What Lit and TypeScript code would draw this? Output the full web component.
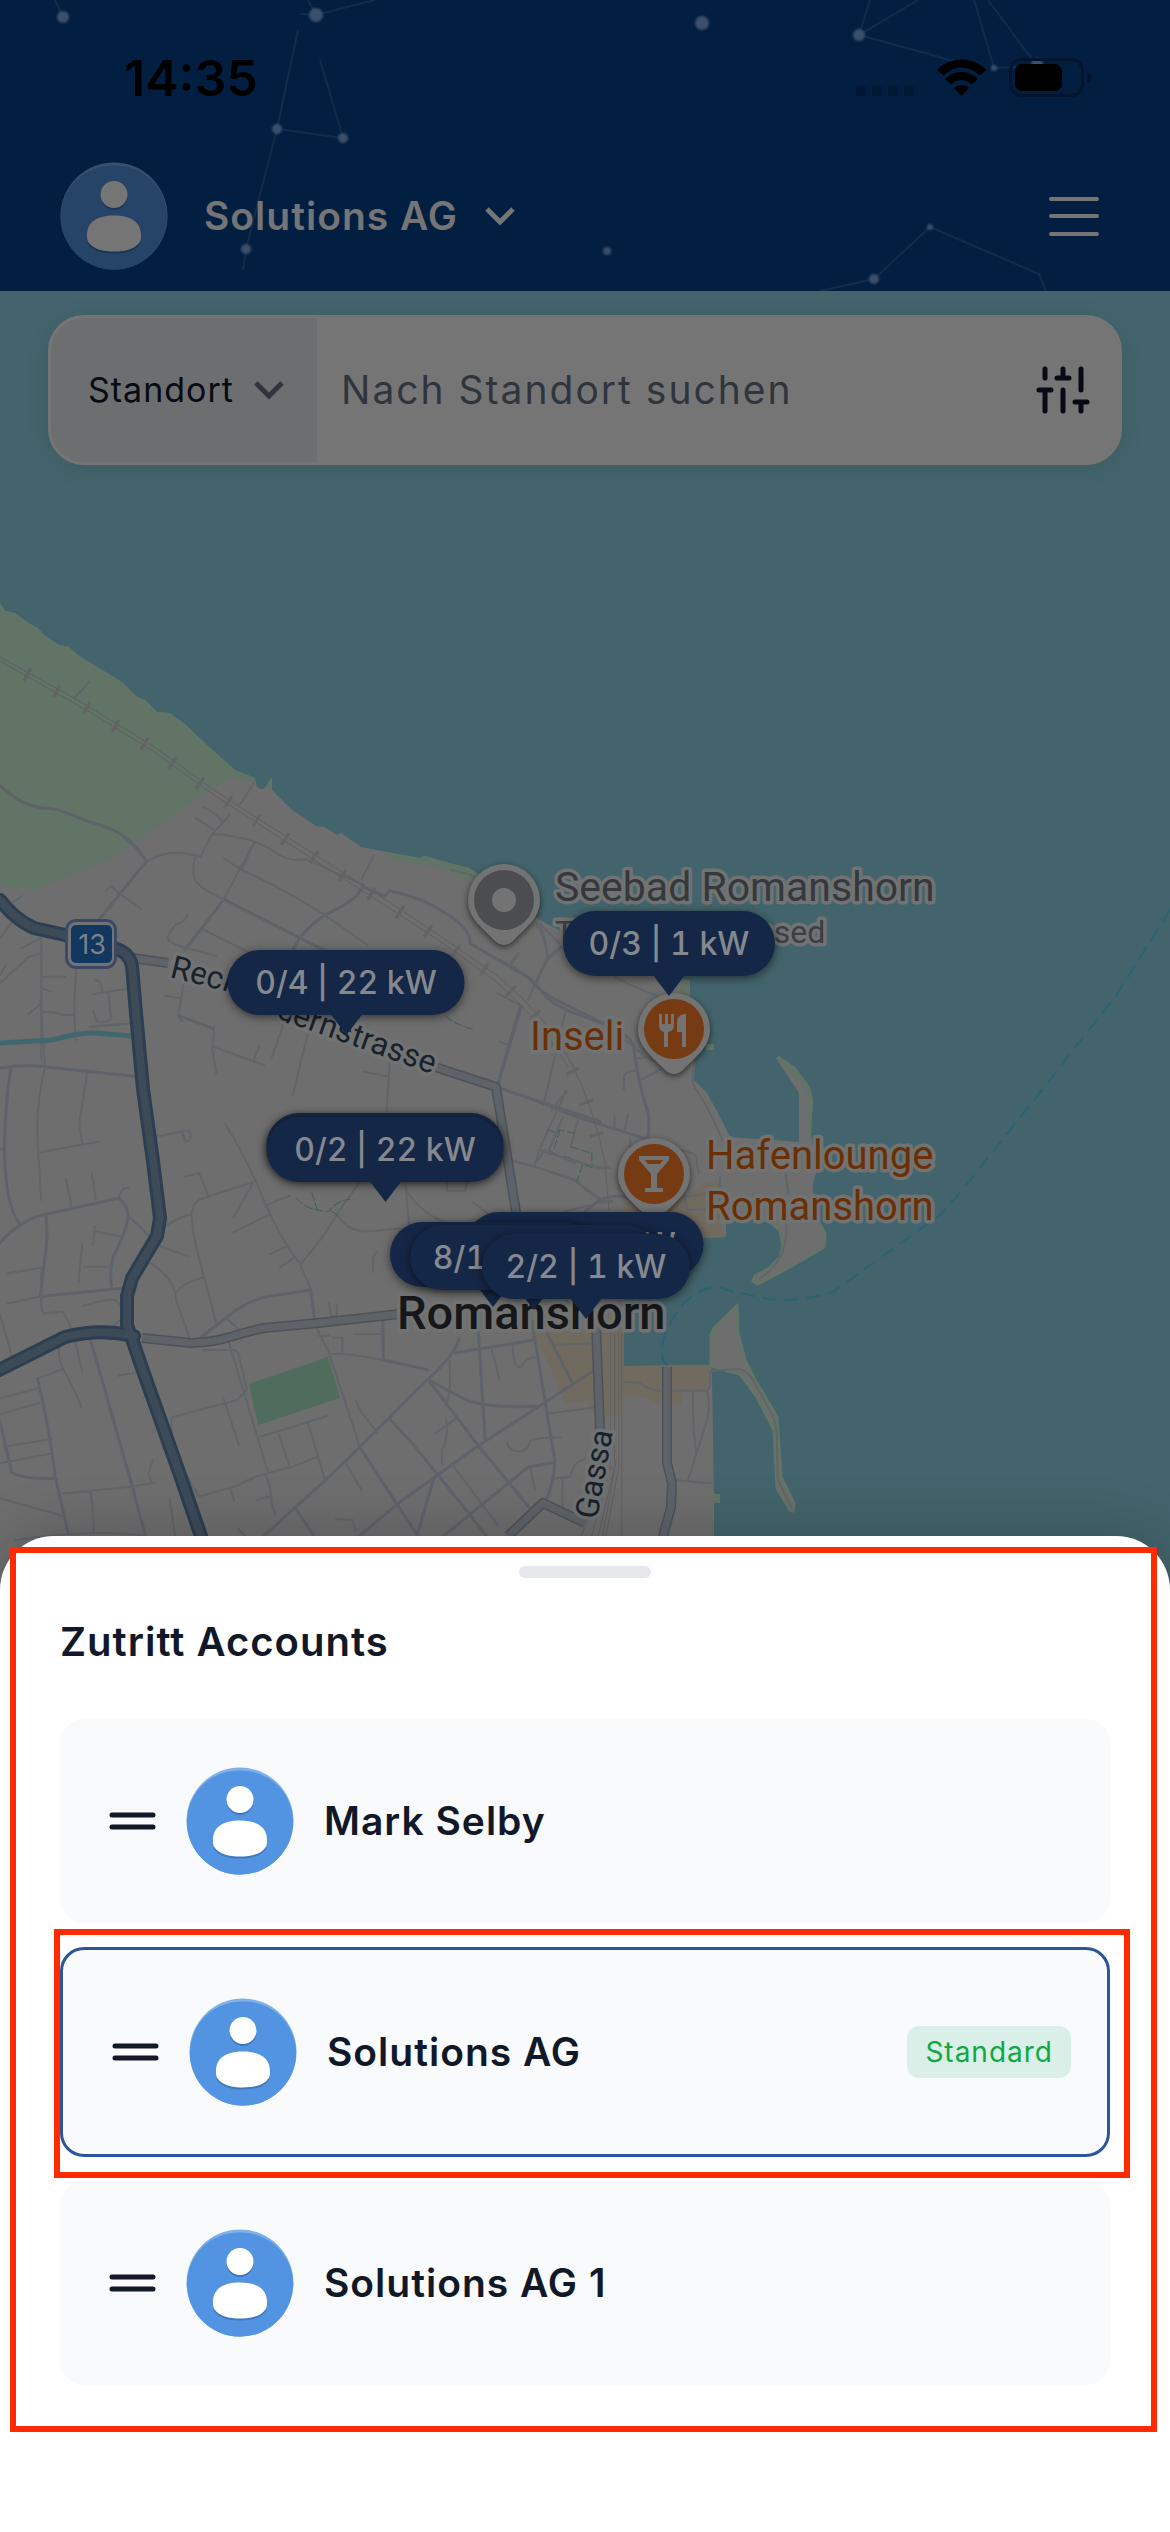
import { LitElement, html, svg, css } from "lit";
import { customElement, property, state } from "lit/decorators.js";
import { classMap } from "lit/directives/class-map.js";
import { styleMap } from "lit/directives/style-map.js";

interface Account {
  name: string;
  standard: boolean;
}

interface Station {
  label: string;
  x: number;
  y: number;
  width: number;
}

const ACCOUNTS: Account[] = [
  { name: "Mark Selby", standard: false },
  { name: "Solutions AG", standard: true },
  { name: "Solutions AG 1", standard: false },
];

/* x is the tip of the bubble, y its top edge, both inside the map.
   Bubbles whose label lies fully under a neighbour carry no text. */
const STATIONS: Station[] = [
  { label: "0/4 | 22 kW", x: 346, y: 659, width: 237 },
  { label: "0/3 | 1 kW", x: 669, y: 620, width: 212 },
  { label: "", x: 385, y: 822, width: 237 },
  { label: "0/2 | 22 kW", x: 385, y: 826, width: 237 },
  { label: "4/4 | 22 kW", x: 585, y: 921, width: 237 },
  { label: "", x: 493, y: 931, width: 206 },
  { label: "8/10 | 22 kW", x: 534, y: 934, width: 248 },
  { label: "2/2 | 1 kW", x: 586, y: 943, width: 208 },
];

const MAP_WIDTH = 1170;

@customElement("user-avatar")
class UserAvatar extends LitElement {
  @property({ type: Boolean, reflect: true }) dimmed = false;

  static styles = css`
    :host {
      display: block;
      flex: none;
      width: 108px;
      height: 108px;
      --disc: #5294e2;
      --rim: #7fb0ea;
      --shade: #3f78bd;
      --person: #ffffff;
    }
    :host([dimmed]) {
      --disc: #264467;
      --rim: #39506d;
      --shade: #1c3556;
      --person: #757575;
    }
    .art {
      display: block;
      width: 100%;
      height: 100%;
    }
    .rim { fill: var(--rim); }
    .disc { fill: var(--disc); }
    .shade { fill: var(--shade); }
    .person { fill: var(--person); }
  `;

  render() {
    return html`
      <svg class="art" viewBox="0 0 108 108" aria-hidden="true">
        <circle class="rim" cx="54" cy="54" r="53.5" />
        <path class="disc" d="M.8 54.500a53.200 53.200 0 0 0 106.400 0C106 24 83 3.500 54 3.500S2 24 .8 54.500z" />
        <g class="shade">
          <circle cx="54" cy="34.500" r="13.500" />
          <path d="M27 75c0-13 10-20 27-20s27 7 27 20c0 3.500 0 6-2 8-4 6-14 8.500-25 8.500S33 89 29 83c-2-2-2-4.500-2-8z" />
        </g>
        <g class="person">
          <circle cx="54" cy="32.500" r="13.500" />
          <path d="M27 73c0-13 10-19.500 27-19.500S81 60 81 73c0 3.500 0 6-2 8-4 6-14 8.500-25 8.500S33 87 29 81c-2-2-2-4.500-2-8z" />
        </g>
      </svg>
    `;
  }
}

@customElement("city-map")
class CityMap extends LitElement {
  static styles = css`
    :host {
      display: block;
      position: absolute;
      inset: 0;
      overflow: hidden;
      background: #43646c;
      font-family: Inter, "Liberation Sans", sans-serif;
    }
    .scene {
      display: block;
      width: 100%;
      height: 100%;
    }
    path, polyline { vector-effect: non-scaling-stroke; }
    .land { fill: #6e6e6e; stroke: none; }
    .reef { fill: #6e6e6e; stroke: #627567; stroke-width: 3; }
    .green { fill: #617466; }
    .park { fill: #506c5c; }
    .works { fill: #716a5f; }
    .line { fill: none; stroke-linejoin: round; stroke-linecap: round; }
    .minor { stroke: #616469; stroke-width: 2; }
    .street { stroke: #5f6369; stroke-width: 3; }
    .case2 { stroke: #4e5257; stroke-width: 10; stroke-linecap: butt; }
    .road2 { stroke: #5e6369; stroke-width: 7; stroke-linecap: butt; }
    .case1 { stroke: #2c3e4f; stroke-width: 14; }
    .road1 { stroke: #3d4a58; stroke-width: 8; }
    .rail { stroke: #606062; stroke-width: 1; }
    .ties { stroke: #636365; stroke-width: 14; stroke-dasharray: 3 31; stroke-linecap: butt; }
    .stream { stroke: #40666f; stroke-width: 5; }
    .foot { stroke: #3f5f55; stroke-width: 1; stroke-dasharray: 8 3; }
    .ferry { stroke: #2a6371; stroke-width: 2; stroke-dasharray: 14 8; stroke-linecap: butt; }
    .label { paint-order: stroke; stroke-linejoin: round; stroke-width: 7; stroke: #717373; font-family: Roboto, "Liberation Sans", sans-serif; }
    .quiet { fill: #35383d; font-size: 41px; }
    .note { fill: #3b3f43; font-size: 32px; }
    .food { fill: #6b2f05; font-size: 40px; }
    .way { fill: #18222c; font-size: 32px; }
    .town { fill: #161718; font-size: 47px; font-weight: 500; }
    .pin { fill: #737373; filter: drop-shadow(0 2px 3px rgb(0 0 0 / 60%)); }
    .pin-grey { fill: #4c4d4f; }
    .pin-food { fill: #763b12; }
    .glyph { fill: #737373; }
    .shield-rim { fill: #3d4962; }
    .shield-edge { fill: #707478; }
    .shield { fill: #123860; }
    .shield-text { fill: #7d8287; font-size: 27px; text-anchor: middle; }
    .station {
      position: absolute;
      height: 65px;
      padding: 0;
      border: 0;
      border-radius: 33px;
      background: #152747;
      color: #85888e;
      font: 500 32px/65px Inter, "Liberation Sans", sans-serif;
      font-variant-numeric: tabular-nums;
      white-space: nowrap;
      transform: translateX(-50%);
      box-shadow: 0 2px 10px rgb(0 0 0 / 55%);
    }
    .station::after {
      content: "";
      position: absolute;
      left: 50%;
      top: 64px;
      margin-left: -16px;
      border: 16px solid transparent;
      border-top: 21px solid #152747;
      border-bottom: 0;
    }
  `;

  private pin(x: number, y: number, tone: string, glyph: unknown) {
    return svg`
      <g transform="translate(${x} ${y})">
        <path class="pin" d="M-36 0a36 36 0 0 1 72 0c0 17-11 25-27 41q-9 8-18 0C-25 25-36 17-36 0z"/>
        <circle class=${tone} r="30"/>
        ${glyph}
      </g>`;
  }

  private terrain() {
    return svg`
      <path class="land" d="M0 603L5 611 15 613 27 622 38 628 44 635 59 645 69 647 78 655 99 668 122 682 137 697 145 700 157 712 170 713 186 725 207 745 235 770 255 778 257 787 261 789 265 788 272 777 272 790 291 809 316 826 325 827 337 835 341 833 361 847 387 852 419 858 425 856 446 862 469 868 478 874 540 920 564 933 620 950 680 975 690 985 690 1030 695 1067 694 1080 707 1093 718 1113 730 1137 799 1142 799 1093 776 1058 779 1056 795 1067 810 1087 813 1100 811 1133 816 1173 813 1183 814 1210 818 1222 771 1223 726 1215 726 1237 705 1238 624 1260 624 1366 711 1365 712 1377 714 1493 714 1600 0 1600z"/>
      <path class="reef" d="M771 1223L780 1230 783 1247 780 1257 770 1268 755 1276 753 1281 758 1284 790 1267 824 1247 825 1233 818 1222z"/>
      <path class="reef" d="M711 1366V1335L714 1328 737 1306 738 1333 745 1360 755 1380 777 1417 781 1477 794 1503 793 1511 790 1510 777 1488 774 1430 757 1397 740 1374z"/>
      <path class="green" d="M776 1058L779 1056 795 1067 810 1087 813 1100 811 1133 808 1133 808 1100 805 1088z"/>
      <path class="green" d="M0 603L5 611 15 613 27 622 38 628 44 635 59 645 69 647 78 655 99 668 122 682 137 697 145 700 157 712 170 713 186 725 207 745 235 770 255 778 254 783 230 777 184 807 134 843 103 862 36 889 0 886z"/>
      <path class="green" d="M387 852L419 858 425 856 446 862 469 868 478 874 470 882 440 868 390 859zM265 788L272 777 272 790zM680 980h10v16h-10zM706 1044h8v6h-8zM713 1494h7v9h-7z"/>
      <path class="works" d="M534 1332L594 1330 624 1300V1366L710 1365V1391H681L682 1404 662 1405 641 1396 622 1397V1416H605L586 1408 592 1400 566 1403 551 1370zM624 1203L684 1197 705 1183H719V1220L726 1237 705 1238 624 1240z"/>
      <path class="park" d="M249 1384L328 1357 340 1398 258 1425z"/>`;
  }

  private streets() {
    return svg`
      <g transform="translate(0 560) scale(.38265 .33333)">
        <path class="line street" d="M0 675Q50 735 115 745Q150 742 230 785Q300 805 330 835Q370 875 382 905L258 1080M585 1018L483 1170M585 1018L880 1190M765 1170Q790 1110 848 1065Q930 1025 948 980L1005 1008L1018 992Q1100 1010 1165 1060Q1230 1105 1228 1150L1385 1255Q1410 1300 1480 1335L1568 1385"/>
        <path class="line minor" d="M382 905Q440 870 480 880Q510 885 525 890Q535 860 555 822L600 765M555 822Q610 825 665 845L585 1018Q510 980 507 950Q502 920 510 893M665 845Q700 860 730 885Q760 905 800 898L950 975M530 740Q560 755 580 782M512 775L558 808M585 895L632 930Q740 985 848 1065L960 1155M632 930L665 845M628 733L663 670M196 412L234 365M945 958L978 885M278 992L290 977L312 1000L370 1047M258 1080L200 1150M530 1108L690 1200M490 1065Q480 1090 460 1092Q440 1120 438 1135Q445 1150 470 1158L565 1188M480 1270L466 1365Q468 1380 480 1385M430 1307L470 1315M0 1135L35 1080L25 1035L58 1008M108 1120V1500M55 1165L108 1133M0 1270L75 1190L108 1180M0 1245L15 1215M108 1250H170M108 1285L135 1295M108 1330L75 1362M108 1355Q150 1355 165 1365H195M200 1215Q190 1350 198 1440M244 1302L340 1285M250 1260Q270 1265 266 1298M283 1298L290 1375Q280 1390 252 1384L244 1352M235 1400L350 1390M1410 1090Q1430 1150 1430 1190L1380 1320M1430 1195L1470 1155M1335 1215L1355 1180M1410 1090L1470 1160M1360 1340L1320 1500M1358 1335L1300 1300M1180 930Q1220 940 1240 950"/>
      </g>
      <g transform="translate(500 800) scale(.4273 .33333)">
        <path class="line street" d="M0 480Q60 520 85 555Q110 605 155 630L240 670Q300 700 312 735Q325 860 345 930Q352 970 345 1015M0 865Q60 890 105 912Q150 940 215 965L345 1018M50 620L0 830M200 1235Q240 1180 290 1190L330 1200"/>
        <path class="line minor" d="M85 370Q110 430 112 475L85 552M112 480L145 440M20 500L42 460M270 530Q290 550 370 588M155 625L103 908M240 665L340 770Q370 790 380 790M318 775L340 772M315 812Q290 815 290 830V868M330 840L380 805M455 790Q445 850 460 870Q500 950 520 1020M0 725L18 735M155 875L125 955L92 1050L80 1100L25 1080M92 1050Q120 1050 125 1060L175 1090M80 1100L180 1140Q200 1175 235 1200M183 958L165 1040M268 948V985M300 942L290 1000M305 1018V1060M400 1045Q450 1055 458 1068L465 1120M435 1190L480 1182M432 1190L438 1230L480 1228M515 1130V1250M668 1118L675 1180M670 1270Q672 1340 655 1370Q640 1410 608 1436"/>
        <path class="line foot" d="M110 988L130 998L140 990L175 1000M140 990L125 1052M165 1040L215 1060V1100M150 1068L220 1105M193 1095L180 1145"/>
      </g>
      <g transform="translate(0 1000) scale(.38265 .35714)">
        <path class="line street" d="M0 190Q70 180 115 187L365 215M28 190Q10 330 12 430Q15 580 52 627M0 680Q60 610 120 600L310 555Q335 575 335 605Q330 650 295 720Q285 770 292 805M120 600Q125 660 120 700L105 830L330 806M470 45L558 80M525 945L600 882Q650 840 700 830L812 812L825 915M237 952L345 1360L380 1500M98 1060Q130 1200 145 1340L178 1490M0 1180L30 1320Q40 1340 150 1340M690 1500L850 1345L940 1252L1118 1062Q1180 1005 1200 950M940 1500L1040 1410L1250 1248L1420 1130L1555 1035M940 1252L1090 1498M1018 1172L1080 1245L1220 1430L1270 1500M1118 1062L1250 1248L1390 1430M1118 1062Q1180 1100 1230 1125Q1290 1142 1400 1138M1000 890L1002 1008L1118 1035M1190 988L1395 952M1250 930L1268 1230M1390 900L1450 1290Q1450 1340 1425 1410M1090 1498L1135 1335M1160 1500L1380 1308L1450 1295M770 1420L820 1500M1430 935L1495 1070M1300 245L1568 340M1360 18L1300 240"/>
        <path class="line minor" d="M105 0L118 187M118 187Q90 300 100 430L108 560M228 203L207 345L215 402M100 427L258 397M0 418H12M172 500L187 578M240 485L250 560M248 633L243 688M248 648L315 662M20 765L108 750M108 750V830M222 747H290M215 684L205 790M310 555L320 530L335 526M335 605L420 690L490 717M500 600Q505 570 520 560L545 550L662 510M408 383L475 368Q500 360 498 378Q500 395 485 395L475 370M482 495L520 484L545 550M500 600Q505 680 540 800L565 905M425 640Q460 610 500 600M386 732Q460 780 460 840L497 950M460 820Q480 790 535 776M588 347Q650 450 695 575Q740 680 785 740L812 810M662 510L610 610M695 575L758 548M610 650L705 600M705 713L748 690M732 748L768 722M785 740Q850 660 880 600L940 510M880 600Q910 650 960 648L1050 640M985 706L975 720V762M560 75L555 140L565 205M560 132L690 182M678 128L662 170M805 90L765 267M740 70L710 160M950 200L1015 215M1020 150L1010 315M1060 520L1070 640M1060 530Q1100 600 1170 625M1235 565L1290 610M0 880L33 1005M20 850L105 830M108 830Q105 870 115 878L165 872Q180 900 192 935L215 1040M216 857Q280 835 302 840Q325 860 320 890L285 925M98 1060L165 1033Q150 1000 155 970M165 1033Q190 1080 213 1140M0 1115L98 1088M0 1160L105 1128M10 1250L135 1230M0 1297L135 1270M165 1382L240 1374L345 1362L405 1352M235 1374Q245 1420 245 1490M0 1395L165 1445M40 1512Q240 1480 380 1500M400 1288L388 1325L395 1350M443 1395L458 1500M530 980H600Q622 975 625 1000L645 1090L620 1120L450 1168Q440 1190 470 1300L520 1390L620 1360Q650 1340 690 1328L770 1305L832 1277M597 955L635 1090L700 1320M585 1118L625 1248M680 1222L752 1200L855 1165M728 1215L755 1302M805 1185L848 1340M602 1370L612 1402M695 1330Q710 1370 710 1410L718 1440M672 1400L708 1388M620 1478L640 1500M825 915L862 992Q900 988 1002 1008M832 940H860M870 945L895 946V985M860 990L940 1250M930 1122Q940 1150 960 1175L985 1210M925 935H995M1175 1010Q1180 1100 1165 1135M1135 1215L1192 1172M1165 1170Q1175 1220 1155 1260V1302M1285 980L1305 1062M1340 965Q1340 1040 1365 1025Q1375 1000 1400 1000M1325 1237Q1330 1270 1365 1262Q1380 1260 1385 1235Q1400 1225 1465 1225M1435 1158L1555 1140M900 1290L945 1372M1180 1298L1300 1470M1250 1400L1300 1468M1385 1310L1398 1370M1470 1340V1440M1450 1340L1490 1335Q1500 1290 1530 1285M878 1453L920 1455L930 1485M860 850L865 885H880V855M590 890L622 920M1440 310L1480 255M1435 420L1470 330M1395 465L1420 425L1568 470M1335 450L1395 465L1500 505L1568 555M1168 510V535H1215L1225 490M1440 605Q1480 590 1540 575M310 1052L360 1043M235 75L350 65"/>
        <path class="line foot" d="M775 555Q800 590 860 592Q880 560 915 558M815 540L830 590M865 590L885 605M1165 45Q1190 70 1240 83"/>
      </g>
      <g transform="translate(500 1200) scale(.4273 .33333)">
        <path class="line minor" d="M290 545L325 548Q350 570 370 572H485L492 560V512L562 508Q580 515 592 540L635 640Q650 680 648 720L650 840Q670 890 683 925M452 575Q450 690 460 760L440 838M485 575Q495 620 480 680L460 760M410 840L495 850M130 435L215 430M155 300L180 330"/>
        <path class="line rail" d="M258 400V800L215 1008M268 400V800L230 1008M278 400V800L248 1008M285 400V1008M262 800L190 1008M272 780L240 1008"/>
      </g>`;
  }

  private arteries() {
    return svg`
      <path class="line stream" d="M0 1043L52 1040Q80 1032 96 1033L132 1036"/>
      <path class="line rail" d="M0 657L88 706 153 746 214 790 268 825 325 861 383 898 440 936 498 976Q550 1020 572 1064T605 1163L609 1210"/>
      <path class="line rail" d="M0 661L88 711 153 751 214 795 268 830 325 867 383 904 440 941 494 980Q545 1024 568 1067"/>
      <path class="line ties" d="M26 674L88 709 153 749 214 793 268 828 325 864 383 901 440 939 496 978Q546 1020 570 1066T603 1163L607 1210"/>
      <path class="line case2" d="M132 958L168 963M432 1066L496 1087 517 1218M142 1338L191 1343Q215 1342 230 1337T264 1328L318 1323 400 1314M596 1325L600 1430M667 1367V1463L672 1483 671 1507 662 1540M508 1536L543 1503 585 1523"/>
      <path class="line road2" d="M132 958L168 963M432 1066L496 1087 517 1218M142 1338L191 1343Q215 1342 230 1337T264 1328L318 1323 400 1314M596 1325L600 1430M667 1367V1463L672 1483 671 1507 662 1540M508 1536L543 1503 585 1523"/>
      <path class="line case1" d="M0 900Q15 920 34 928L65 935 92 942 117 949Q130 954 132 966L136 1013 143 1089 153 1161 160 1218 157 1236 132 1278 127 1296 127 1325 132 1339 142 1368 180 1475 204 1545M134 1336Q100 1328 65 1337L-5 1372"/>
      <path class="line road1" d="M0 900Q15 920 34 928L65 935 92 942 117 949Q130 954 132 966L136 1013 143 1089 153 1161 160 1218 157 1236 132 1278 127 1296 127 1325 132 1339 142 1368 180 1475 204 1545M134 1336Q100 1328 65 1337L-5 1372"/>
      <path class="line ferry" d="M1170 910L1115 997 1034 1100 962 1190 940 1215 833 1292Q795 1303 770 1299T718 1287Q690 1288 672 1320T667 1365"/>`;
  }

  private places() {
    return svg`
      <rect class="shield-rim" x="65" y="919" width="52" height="50" rx="11"/>
      <rect class="shield-edge" x="68" y="922" width="46" height="44" rx="8"/>
      <rect class="shield" x="71" y="925" width="41" height="38" rx="5"/>
      <text class="shield-text" x="92" y="954">13</text>
      <path id="street-line" fill="none" d="M169 977L225 991Q256 1001 284 1021L460 1084"/>
      <text class="label way"><textPath href="#street-line">Reckholdernstrasse</textPath></text>
      <path id="gassa-line" fill="none" d="M597 1520L604 1480 615 1420"/>
      <text class="label way"><textPath href="#gassa-line">Gassa</textPath></text>
      <text class="label quiet" x="555" y="901">Seebad Romanshorn</text>
      <text class="label note" x="555" y="943">Temporarily closed</text>
      <text class="label food" x="530" y="1050">Inseli</text>
      <text class="label food" x="706" y="1169">Hafenlounge</text>
      <text class="label food" x="706" y="1220">Romanshorn</text>
      <text class="label town" x="397" y="1329">Romanshorn</text>
      ${this.pin(504, 900, "pin-grey", svg`<circle class="glyph" r="12"/>`)}
      ${this.pin(674, 1029, "pin-food", svg`
        <path class="glyph" d="M-15-15h3v10h3v-10h3v10h3v-10h3V-4q0 6-6 7v15h-4V3q-5-1-5-7zM12-15V18H8V3H3V-6q0-9 9-9z"/>`)}
      ${this.pin(654, 1174, "pin-food", svg`
        <path class="glyph" d="M-15-18h30v4L3 0v14h6v4H-9v-4h6V0L-15-14zm6 4l3 4H6l3-4z"/>`)}`;
  }

  render() {
    return html`
      <svg class="scene" viewBox="0 291 1170 1299" preserveAspectRatio="xMidYMin slice" role="img" aria-label="Romanshorn">
        ${this.terrain()} ${this.streets()} ${this.arteries()} ${this.places()}
      </svg>
      ${STATIONS.map(
        (s) => html`<button
          type="button"
          class="station"
          aria-label=${s.label || "Station"}
          style=${styleMap({ left: `${(s.x / MAP_WIDTH) * 100}%`, top: `${s.y}px`, width: `${s.width}px` })}
        >${s.label}</button>`
      )}
    `;
  }
}

@customElement("account-card")
class AccountCard extends LitElement {
  @property() name = "";
  @property({ type: Boolean }) standard = false;

  static styles = css`
    :host { display: block; }
    .card {
      display: flex;
      align-items: center;
      gap: 30px;
      padding: 48px 36px 48px 48px;
      border-radius: 24px;
      background: #f9fafc;
    }
    .selected { border: 3px solid #2c5699; }
    .grip {
      flex: none;
      width: 48px;
      height: 48px;
      padding: 0;
      border: 0;
      background: none;
    }
    .icon { display: block; }
    .bar { stroke: #111827; stroke-width: 5; stroke-linecap: round; }
    .name {
      flex: 1;
      padding: 0;
      border: 0;
      background: none;
      color: #111827;
      text-align: left;
      font: 600 39px/48px Inter, "Liberation Sans", sans-serif;
      letter-spacing: 1px;
    }
    .badge {
      padding: 8px 18px;
      border-radius: 12px;
      background: #d9efe8;
      color: #0fa943;
      font: 400 28px/36px Inter, "Liberation Sans", sans-serif;
      letter-spacing: 1px;
    }
  `;

  render() {
    return html`
      <div class=${classMap({ card: true, selected: this.standard })}>
        <button class="grip" type="button" aria-label="Verschieben">
          <svg class="icon" width="48" height="48" viewBox="0 0 48 48" aria-hidden="true">
            <path class="bar" d="M4 18h41M4 30h41" />
          </svg>
        </button>
        <user-avatar></user-avatar>
        <button class="name" type="button">${this.name}</button>
        ${this.standard ? html`<span class="badge">Standard</span>` : null}
      </div>
    `;
  }
}

@customElement("app-root")
class AppRoot extends LitElement {
  @state() private accounts: Account[] = ACCOUNTS;

  static styles = css`
    :host {
      display: block;
      font-family: Inter, "Liberation Sans", sans-serif;
    }
    .screen {
      display: flex;
      flex-direction: column;
      min-height: 100vh;
      background: #43646c;
    }
    .top {
      position: relative;
      overflow: hidden;
      background: #021f42;
    }
    .stars {
      position: absolute;
      inset: 0;
      width: 100%;
      height: 100%;
    }
    .star { fill: #3c506b; filter: blur(1px); }
    .ray { fill: none; stroke: #112d4c; stroke-width: 2; }
    .status {
      position: relative;
      display: flex;
      align-items: center;
      justify-content: space-between;
      height: 156px;
      padding: 0 78px 0 124px;
      color: #000;
    }
    .clock { font-size: 50px; line-height: 60px; font-weight: 600; }
    .account-bar {
      position: relative;
      display: flex;
      align-items: center;
      justify-content: space-between;
      padding: 6px 60px 21px;
    }
    .switcher {
      display: flex;
      align-items: center;
      gap: 24px;
      padding: 0;
      border: 0;
      background: none;
      color: #757575;
      font: 600 39px/48px Inter, "Liberation Sans", sans-serif;
      letter-spacing: 1px;
    }
    .who { padding-left: 12px; }
    .chevron { fill: none; stroke: currentColor; stroke-width: 5; }
    .menu {
      padding: 0;
      border: 0;
      background: none;
      color: #757575;
    }
    .icon { display: block; }
    .menu-lines { stroke: currentColor; stroke-width: 4; stroke-linecap: round; }
    .map {
      position: relative;
      flex: 1;
      min-height: 400px;
    }
    .search {
      position: relative;
      display: flex;
      align-items: center;
      height: 144px;
      margin: 24px 48px 0;
      border: 3px solid #757575;
      border-radius: 36px;
      background: #757575;
      overflow: hidden;
    }
    .halo {
      position: absolute;
      inset: 24px 48px auto;
      height: 150px;
      border-radius: 36px;
      box-shadow: 0 4px 24px rgb(0 0 0 / 8%);
    }
    .scope {
      display: flex;
      align-items: center;
      align-self: stretch;
      position: relative;
      background: #6d6e70;
      color: #30343c;
    }
    .kind {
      appearance: none;
      align-self: stretch;
      width: 266px;
      padding: 0 80px 0 37px;
      border: 0;
      background: none;
      color: #080b14;
      font: 400 34px/42px Inter, "Liberation Sans", sans-serif;
      letter-spacing: 1px;
    }
    .kind-arrow { position: absolute; right: 33px; pointer-events: none; }
    .query {
      flex: 1;
      min-width: 0;
      padding: 0 24px;
      border: 0;
      background: none;
      color: #30353d;
      font: 400 39px/48px Inter, "Liberation Sans", sans-serif;
      letter-spacing: 2px;
    }
    .query::placeholder { color: #30353d; opacity: 1; }
    .filter {
      padding: 0 28px 0 0;
      border: 0;
      background: none;
    }
    .filter-lines { fill: none; stroke: #080b14; stroke-width: 5; stroke-linecap: round; }
    .sheet {
      position: relative;
      margin-top: -54px;
      padding: 30px 60px 147px;
      border-radius: 54px 54px 0 0;
      background: #fff;
      box-shadow: 0 0 60px rgb(0 0 0 / 22%);
    }
    .handle {
      width: 132px;
      height: 12px;
      margin: 0 auto;
      border-radius: 6px;
      background: #e5e7eb;
    }
    .title {
      margin: 40px 0 53px;
      color: #111827;
      font-size: 40px;
      line-height: 48px;
      font-weight: 600;
      letter-spacing: 1px;
    }
    .list {
      display: grid;
      gap: 24px;
      margin: 0;
      padding: 0;
      list-style: none;
    }
    .item { position: relative; }
    .mark {
      position: absolute;
      border: 6px solid #ff2a00;
      pointer-events: none;
    }
    .mark-sheet { inset: 11px 13px 100px 10px; }
    .mark-item { inset: -18px -20px -21px -6px; }
  `;

  private sky() {
    const stars = [
      [63, 17, 6], [316, 15, 7], [277, 129, 5], [343, 138, 5], [246, 249, 5], [702, 23, 7],
      [859, 35, 6], [994, 68, 3], [1037, 64, 6], [607, 251, 4], [874, 279, 5], [930, 227, 3],
    ];
    return html`
      <svg class="stars" viewBox="0 0 1170 291" preserveAspectRatio="xMidYMid slice" aria-hidden="true">
        <path class="ray" d="M55 0L63 17M300 14L316 15 375 0M308 0L316 15 300 14M298 30L277 129 343 138 320 60M277 129L246 249 243 270M870 0L859 35 918 0M859 35L965 64M974 0L994 68 1037 66 988 0M820 291L874 279 930 227 1039 274 1046 291" />
        ${stars.map(([x, y, r]) => svg`<circle class="star" cx=${x} cy=${y} r=${r} />`)}
      </svg>
    `;
  }

  render() {
    return html`
      <main class="screen">
        <header class="top">
          ${this.sky()}
          <div class="status">
            <span class="clock">14:35</span>
            <svg class="icon" width="236" height="40" viewBox="856 58 236 40" aria-hidden="true">
              <g fill="#001733">
                <rect x="856" y="86" width="10" height="10" rx="3" />
                <rect x="872" y="86" width="10" height="10" rx="3" />
                <rect x="888" y="86" width="10" height="10" rx="3" />
                <rect x="904" y="86" width="10" height="10" rx="3" />
              </g>
              <path d="M937 70C950 56 973 56 986.500 70L980 75.500C969 65 954 65 943.500 75.500zM945 79C954 69.500 969 69.500 978 79L971.500 84.500C966 78.500 957 78.500 951.500 84.500zM954 88C958 84 965 84 969 88L961.500 96z" />
              <rect x="1010.500" y="59.500" width="72" height="36" rx="11" fill="none" stroke="#01142b" stroke-width="3" />
              <rect x="1015" y="64" width="47" height="27" rx="7" />
              <path d="M1087 72q4 1 4 5.500t-4 5.500z" fill="#01142b" />
            </svg>
          </div>
          <div class="account-bar">
            <button class="switcher" type="button">
              <user-avatar dimmed></user-avatar>
              <span class="who">Solutions AG</span>
              <svg class="icon" width="36" height="36" viewBox="0 0 36 36" aria-hidden="true">
                <path class="chevron" d="M5 11l13 13 13-13" />
              </svg>
            </button>
            <button class="menu" type="button" aria-label="Menü">
              <svg class="icon" width="72" height="72" viewBox="0 0 72 72" aria-hidden="true">
                <path class="menu-lines" d="M13 19h46M13 36h46M13 54h46" />
              </svg>
            </button>
          </div>
        </header>
        <section class="map">
          <city-map></city-map>
          <div class="halo"></div>
          <form class="search">
            <div class="scope">
              <select class="kind" aria-label="Suche nach">
                <option>Standort</option>
              </select>
              <svg class="icon kind-arrow" width="30" height="24" viewBox="0 0 30 24" aria-hidden="true">
                <path class="chevron" d="M2 5l13 13L28 5" />
              </svg>
            </div>
            <input class="query" type="search" placeholder="Nach Standort suchen" aria-label="Nach Standort suchen" />
            <button class="filter" type="button" aria-label="Filter">
              <svg class="icon" width="56" height="50" viewBox="1034 365 56 50" aria-hidden="true">
                <path class="filter-lines" d="M1044 369v9M1038 390h12M1044 390v21M1062 369v9M1056 378h12M1062 390v21M1080 369v21M1074 402h12M1080 402v9" />
              </svg>
            </button>
          </form>
        </section>
        <section class="sheet">
          <div class="handle"></div>
          <h1 class="title">Zutritt Accounts</h1>
          <ul class="list">
            ${this.accounts.map(
              (a) => html`
                <li class="item">
                  <account-card .name=${a.name} .standard=${a.standard}></account-card>
                  ${a.standard ? html`<div class="mark mark-item"></div>` : null}
                </li>
              `
            )}
          </ul>
          <div class="mark mark-sheet"></div>
        </section>
      </main>
    `;
  }
}
